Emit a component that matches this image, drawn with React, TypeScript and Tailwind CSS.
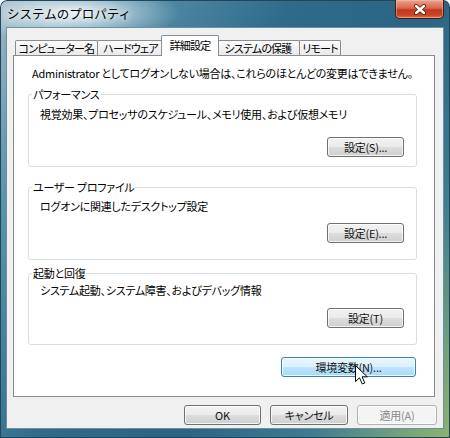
import React from "react";

type Kind = "normal" | "hot" | "disabled";

const btnKinds: Record<Kind, string> = {
  normal:
    "border-[#707070] bg-[linear-gradient(#f2f2f2_0%,#ebebeb_50%,#dddddd_50%,#cfcfcf_100%)] text-[#111]",
  hot: "border-[#3c7fb1] bg-[linear-gradient(#eaf6fd_0%,#d9f0fc_50%,#bee6fd_50%,#a7d9f5_100%)] text-[#111]",
  disabled: "border-[#adb2b5] bg-[#f4f4f4] text-[#8a8a8a]",
};

function Btn({ label, w, kind = "normal" }: { label: string; w: string; kind?: Kind }) {
  return (
    <div
      className={`flex h-[20px] ${w} items-center justify-center rounded-[3px] border shadow-[inset_0_0_0_1px_rgba(255,255,255,0.75)] ${btnKinds[kind]}`}
    >
      {label}
    </div>
  );
}

function Tab({ label, w, ml, active }: { label: string; w: string; ml: string; active?: boolean }) {
  return (
    <div
      className={`${w} ${ml} flex items-center justify-center whitespace-nowrap rounded-t-[2px] border border-b-0 border-[#898c95] tracking-[-0.8px] ${
        active
          ? "relative z-10 h-[21px] bg-white pb-[2px]"
          : "h-[16px] bg-[linear-gradient(#fcfcfc,#e8e8e8)] pb-[1px]"
      }`}
    >
      {label}
    </div>
  );
}

function Group({
  title,
  desc,
  btn,
  top,
  descMt,
  btnMt,
  pb,
}: {
  title: string;
  desc: string;
  btn: string;
  top: string;
  descMt: string;
  btnMt: string;
  pb: string;
}) {
  return (
    <fieldset className={`${top} ${pb} ml-[14px] w-[389px] rounded-[3px] border border-[#d5dfe5]`}>
      <legend className="ml-[3px] px-[1px]">{title}</legend>
      <div className={`${descMt} pl-[11px]`}>{desc}</div>
      <div className={`${btnMt} flex justify-end pr-[12px]`}>
        <Btn label={btn} w="w-[77px]" />
      </div>
    </fieldset>
  );
}

export default function App() {
  return (
    <div className="relative h-[438px] w-[450px] overflow-hidden rounded-t-[7px] bg-[radial-gradient(ellipse_110px_30px_at_70px_13px,rgba(235,242,246,0.95),rgba(235,242,246,0)_100%),linear-gradient(120deg,#9cb7c6_0%,#5c95ad_16%,#2f6a8b_42%,#2b6484_62%,#3d7c92_80%,#79a678_94%,#8fb36f_100%)] px-[6px] pb-[9px] font-['Noto_Sans_CJK_JP','Noto_Sans',sans-serif] text-[11px] leading-[16px] tracking-[-0.25px] text-black shadow-[inset_0_0_0_1px_#23455a] [font-feature-settings:'palt']">
      {/* title bar */}
      <div className="flex h-[27px] items-start justify-between">
        <div className="pl-[1px] pt-[6px] text-[12.5px] tracking-normal [font-feature-settings:normal] [text-shadow:0_0_6px_#fff,0_0_10px_#fff]">
          システムのプロパティ
        </div>
        <div className="flex h-[19px] w-[49px] items-center justify-center rounded-b-[5px] border border-t-0 border-[#4a1a12] bg-[linear-gradient(#eba48f_0%,#d9664c_45%,#c0381d_55%,#c9452a_85%,#e07a55_100%)] shadow-[inset_0_0_0_1px_rgba(255,200,180,0.45)]">
          <svg width="14" height="11" viewBox="0 0 14 11">
            <path d="M3 2 L11 9 M11 2 L3 9" stroke="#5a1a10" strokeWidth="4" strokeLinecap="round" />
            <path d="M3 2 L11 9 M11 2 L3 9" stroke="#fff" strokeWidth="2.4" strokeLinecap="round" />
          </svg>
        </div>
      </div>

      {/* client area */}
      <div className="flex h-[402px] flex-col border border-[#6d90a0] bg-[#f0f0f0]">
        <div className="ml-[6px] mt-[7px] flex h-[21px] items-end pl-[2px]">
          <Tab label="コンピューター名" w="w-[83px]" ml="ml-0" />
          <Tab label="ハードウェア" w="w-[67px]" ml="-ml-px" />
          <Tab label="詳細設定" w="w-[58px]" ml="-ml-[3px]" active />
          <Tab label="システムの保護" w="w-[84px]" ml="-ml-[3px]" />
          <Tab label="リモート" w="w-[42px]" ml="-ml-px" />
        </div>

        <div className="-mt-px ml-[6px] flex h-[342px] w-[422px] flex-col border border-[#898c95] bg-white">
          <div className="mt-[9px] whitespace-nowrap pl-[18px]">
            Administrator としてログオンしない場合は、これらのほとんどの変更はできません。
          </div>
          <Group
            title="パフォーマンス"
            desc="視覚効果、プロセッサのスケジュール、メモリ使用、および仮想メモリ"
            btn="設定(S)..."
            top="mt-[5px]"
            descMt="mt-[4px]"
            btnMt="mt-[15px]"
            pb="pb-[9px]"
          />
          <Group
            title="ユーザー プロファイル"
            desc="ログオンに関連したデスクトップ設定"
            btn="設定(E)..."
            top="mt-[12px]"
            descMt="mt-[3px]"
            btnMt="mt-[9px]"
            pb="pb-[16px]"
          />
          <Group
            title="起動と回復"
            desc="システム起動、システム障害、およびデバッグ情報"
            btn="設定(T)"
            top="mt-[5px]"
            descMt="mt-[1px]"
            btnMt="mt-[10px]"
            pb="pb-[16px]"
          />
          <div className="mt-[12px] flex justify-end pr-[18px]">
            <Btn label="環境変数(N)..." w="w-[135px]" kind="hot" />
          </div>
        </div>

        <div className="mt-[8px] flex justify-end gap-[9px] pr-[6px]">
          <Btn label="OK" w="w-[77px]" />
          <Btn label="キャンセル" w="w-[78px]" />
          <Btn label="適用(A)" w="w-[80px]" kind="disabled" />
        </div>
      </div>

      {/* mouse pointer */}
      <svg className="absolute left-[355px] top-[365px]" width="14" height="21" viewBox="0 0 14 21">
        <path
          d="M0.5 0.5 L0.5 16.5 L4.5 12.8 L7.3 19 L9.8 17.9 L7.1 11.8 L12.3 11.8 Z"
          fill="#fff"
          stroke="#000"
          strokeWidth="1"
          strokeLinejoin="round"
        />
      </svg>
    </div>
  );
}
